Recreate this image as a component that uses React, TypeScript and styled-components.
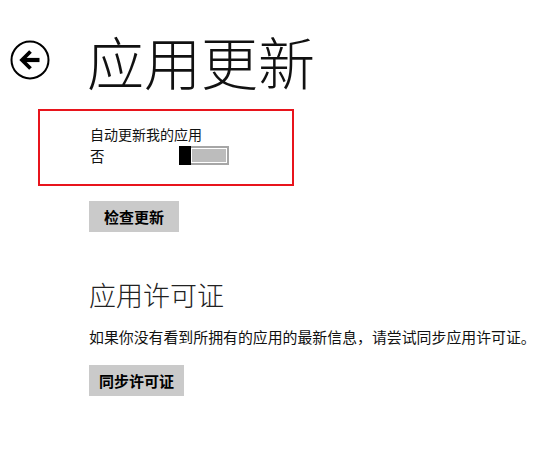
import styled, { createGlobalStyle } from 'styled-components'

const GlobalStyle = createGlobalStyle`
  html, body {
    margin: 0;
    padding: 0;
    background: #fff;
  }
  body {
    font-family: "Noto Sans CJK SC", "Noto Sans", sans-serif;
    color: #000;
  }
`

const Page = styled.div`
  width: 550px;
  height: 453px;
  overflow: hidden;
  padding-top: 32px;
  box-sizing: border-box;
`

const Header = styled.header`
  display: flex;
  align-items: center;
  height: 56px;
`

const BackButton = styled.button`
  width: 40px;
  height: 40px;
  margin-left: 10px;
  padding: 0;
  border: none;
  background: none;
  display: flex;
  align-items: center;
  justify-content: center;
  svg {
    display: block;
  }
`

const Title = styled.h1`
  margin: 0 0 0 37px;
  font-size: 57px;
  line-height: 56px;
  font-weight: 300;
  color: #111;
  letter-spacing: 0;
`

const Content = styled.main`
  padding-left: 38px;
  margin-top: 21px;
`

const Highlight = styled.section`
  width: 256px;
  box-sizing: border-box;
  border: 2px solid #e8141c;
  padding: 13px 0 19px 50px;
`

const Label = styled.div`
  font-size: 14px;
  line-height: 20px;
  color: #111;
`

const ToggleRow = styled.div`
  display: flex;
  align-items: center;
  height: 19px;
  margin-top: 2px;
`

const ToggleText = styled.span`
  width: 89px;
  font-size: 14.5px;
  line-height: 19px;
  color: #111;
`

const Toggle = styled.div<{ $on: boolean }>`
  width: 50px;
  height: 19px;
  box-sizing: border-box;
  display: flex;
  justify-content: ${p => (p.$on ? 'flex-end' : 'flex-start')};
  background: #a6a6a6;
  padding: 2px 2px 2px 0;
`

const Track = styled.div`
  flex: 1;
  border: 1px solid #fff;
  background: #bcbcbc;
`

const Thumb = styled.div`
  width: 12px;
  margin: -2px 0;
  background: #000;
  flex: none;
`

const Block = styled.div<{ $top: number }>`
  padding-left: 89px;
  margin-top: ${p => p.$top}px;
`

const Button = styled.button<{ $top?: number }>`
  display: block;
  min-width: 90px;
  height: 31px;
  margin-top: ${p => p.$top ?? 0}px;
  padding: 0 10px;
  border: none;
  background: #cacaca;
  font-family: "Noto Sans CJK SC", "Noto Sans", sans-serif;
  font-size: 15px;
  font-weight: 700;
  color: #000;
  cursor: pointer;
`

const SubTitle = styled.h2`
  margin: 0;
  font-size: 27px;
  line-height: 36px;
  font-weight: 300;
  color: #222;
`

const Paragraph = styled.p`
  margin: 14px 0 0;
  font-size: 14.9px;
  line-height: 20px;
  color: #111;
  white-space: nowrap;
`

function BackIcon() {
  return (
    <svg width="40" height="40" viewBox="0 0 40 40">
      <circle cx="20" cy="20" r="18.5" fill="none" stroke="#000" strokeWidth="2" />
      <path d="M29.5 20 H14" stroke="#000" strokeWidth="4.2" fill="none" />
      <path d="M20.5 11.5 L12 20 L20.5 28.5" stroke="#000" strokeWidth="3.8" fill="none" strokeLinejoin="miter" />
    </svg>
  )
}

function App() {
  return (
    <>
      <GlobalStyle />
      <Page>
        <Header>
          <BackButton aria-label="返回">
            <BackIcon />
          </BackButton>
          <Title>应用更新</Title>
        </Header>
        <Content>
          <Highlight>
            <Label>自动更新我的应用</Label>
            <ToggleRow>
              <ToggleText>否</ToggleText>
              <Toggle $on={false}>
                <Thumb />
                <Track />
              </Toggle>
            </ToggleRow>
          </Highlight>
        </Content>
        <Block $top={15}>
          <Button>检查更新</Button>
        </Block>
        <Block $top={45}>
          <SubTitle>应用许可证</SubTitle>
          <Paragraph>如果你没有看到所拥有的应用的最新信息，请尝试同步应用许可证。</Paragraph>
          <Button $top={18}>同步许可证</Button>
        </Block>
      </Page>
    </>
  )
}

export default App
